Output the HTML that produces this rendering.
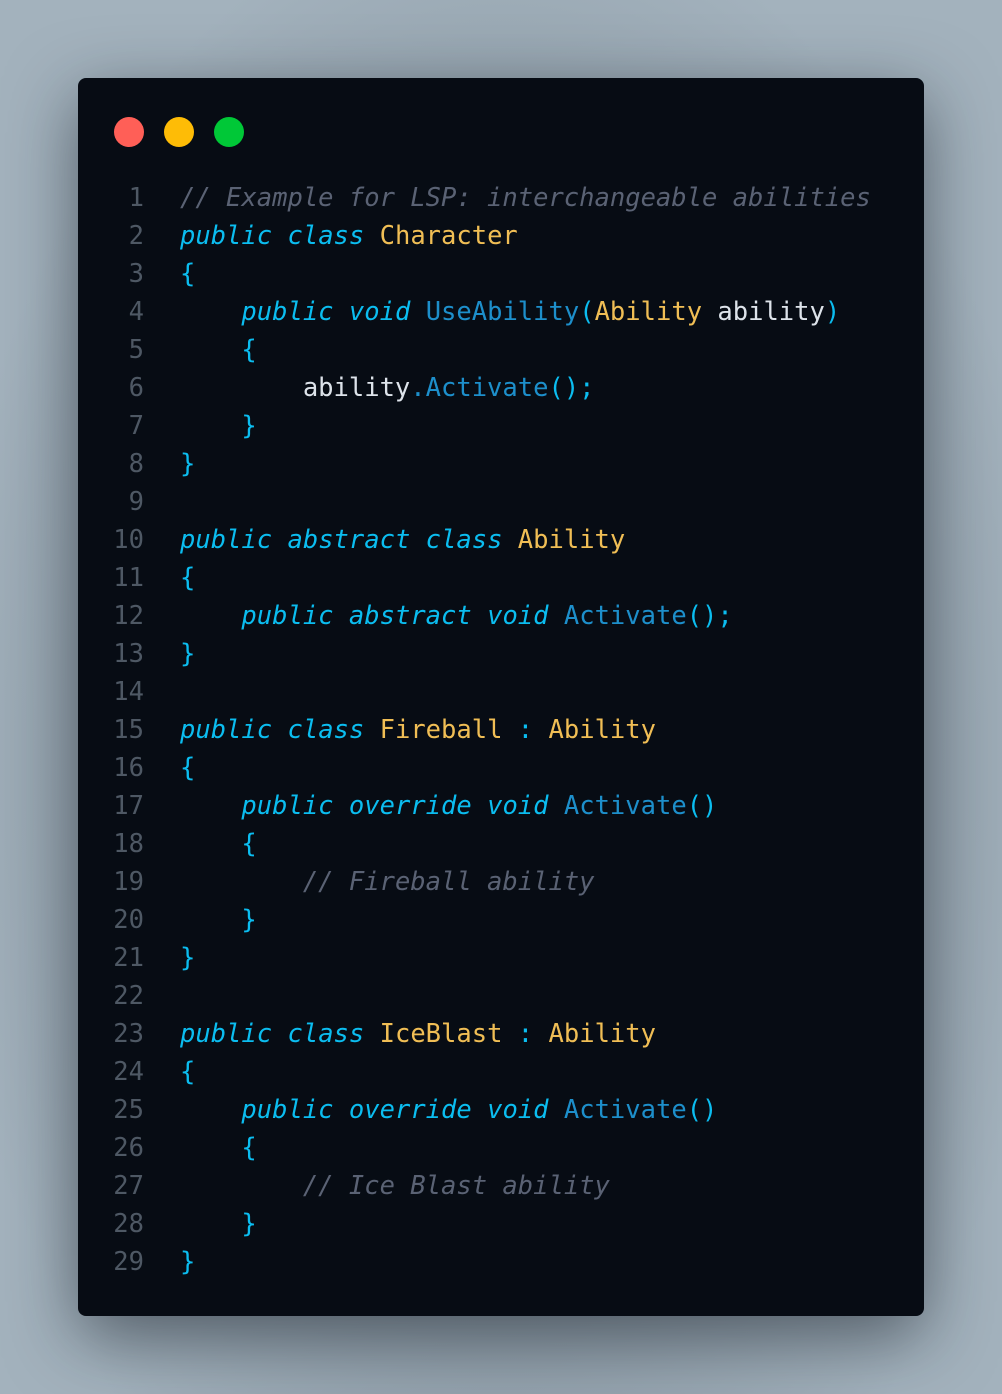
<!DOCTYPE html>
<html><head><meta charset="utf-8"><style>
html,body{margin:0;padding:0;}
body{width:1002px;height:1394px;overflow:hidden;position:relative;
background:radial-gradient(ellipse at 50% 55%, #6f7c86 0%, #8c9aa5 45%, #a3b2bd 80%);}
.win{position:absolute;left:78px;top:78px;width:846px;height:1238px;background:#070c14;border-radius:8px;
box-shadow:0 20px 70px rgba(20,28,36,0.55);}
.dot{position:absolute;top:117px;width:30px;height:30px;border-radius:50%;}
.code{position:absolute;left:0;top:179px;font-family:"DejaVu Sans Mono","Liberation Mono",monospace;font-size:25.5px;line-height:38px;white-space:pre;}
.ln{position:absolute;left:100px;width:44px;text-align:right;color:#4e5864;}
.tx{position:absolute;left:180px;color:#dde3ea;}
.k{color:#0bbdf0;font-style:italic;}
.p{color:#0bbdf0;}
.f{color:#1d8fcb;}
.t{color:#f0be55;}
.c{color:#5a6274;font-style:italic;}
</style></head><body>
<div class="win"></div>
<div class="dot" style="left:114px;background:#ff5f57"></div>
<div class="dot" style="left:164px;background:#febc06"></div>
<div class="dot" style="left:214px;background:#00c837"></div>
<div class="code">
<div class="ln" style="top:0">1
2
3
4
5
6
7
8
9
10
11
12
13
14
15
16
17
18
19
20
21
22
23
24
25
26
27
28
29</div>
<div class="tx" style="top:0"><span class="c">// Example for LSP: interchangeable abilities</span>
<span class="k">public</span> <span class="k">class</span> <span class="t">Character</span>
<span class="p">{</span>
    <span class="k">public</span> <span class="k">void</span> <span class="f">UseAbility</span><span class="p">(</span><span class="t">Ability</span> ability<span class="p">)</span>
    <span class="p">{</span>
        ability<span class="f">.Activate</span><span class="p">();</span>
    <span class="p">}</span>
<span class="p">}</span>

<span class="k">public</span> <span class="k">abstract</span> <span class="k">class</span> <span class="t">Ability</span>
<span class="p">{</span>
    <span class="k">public</span> <span class="k">abstract</span> <span class="k">void</span> <span class="f">Activate</span><span class="p">();</span>
<span class="p">}</span>

<span class="k">public</span> <span class="k">class</span> <span class="t">Fireball</span> <span class="p">:</span> <span class="t">Ability</span>
<span class="p">{</span>
    <span class="k">public</span> <span class="k">override</span> <span class="k">void</span> <span class="f">Activate</span><span class="p">()</span>
    <span class="p">{</span>
        <span class="c">// Fireball ability</span>
    <span class="p">}</span>
<span class="p">}</span>

<span class="k">public</span> <span class="k">class</span> <span class="t">IceBlast</span> <span class="p">:</span> <span class="t">Ability</span>
<span class="p">{</span>
    <span class="k">public</span> <span class="k">override</span> <span class="k">void</span> <span class="f">Activate</span><span class="p">()</span>
    <span class="p">{</span>
        <span class="c">// Ice Blast ability</span>
    <span class="p">}</span>
<span class="p">}</span></div>
</div>
</body></html>
